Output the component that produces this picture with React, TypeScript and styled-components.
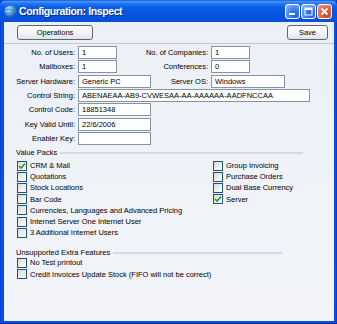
import React from 'react';
import styled, { createGlobalStyle } from 'styled-components';

const GlobalStyle = createGlobalStyle`
  html, body {
    margin: 0;
    padding: 0;
    background: #0b47df;
  }
  body {
    font-family: "Liberation Sans", Arial, sans-serif;
  }
`;

type Pack = { label: string; on?: boolean };

const leftPacks: Pack[] = [
  { label: 'CRM & Mail', on: true },
  { label: 'Quotations' },
  { label: 'Stock Locations' },
  { label: 'Bar Code' },
  { label: 'Currencies, Languages and Advanced Pricing' },
  { label: 'Internet Server One Internet User' },
  { label: '3 Additional Internet Users' },
];

const rightPacks: Pack[] = [
  { label: 'Group Invoicing' },
  { label: 'Purchase Orders' },
  { label: 'Dual Base Currency' },
  { label: 'Server', on: true },
];

const extras: Pack[] = [
  { label: 'No Test printout' },
  { label: 'Credit Invoices Update Stock (FIFO will not be correct)' },
];

const CheckMark: React.FC = () => (
  <svg width="8" height="8" viewBox="0 0 8 8">
    <path d="M1 4 L3 6 L7 1.6" fill="none" stroke="#21a121" strokeWidth="1.6" />
  </svg>
);

const CheckItem: React.FC<{ item: Pack }> = ({ item }) => (
  <Item>
    <Box>{item.on && <CheckMark />}</Box>
    {item.label}
  </Item>
);

const App: React.FC = () => {
  return (
    <React.Fragment>
      <GlobalStyle />
      <Window>
        <TitleBar>
          <AppIcon width="13" height="13" viewBox="0 0 13 13">
            <defs>
              <radialGradient id="globe" cx="0.35" cy="0.3" r="0.75">
                <stop offset="0" stopColor="#e8f4ff" />
                <stop offset="0.45" stopColor="#5aa6e6" />
                <stop offset="1" stopColor="#1a4f9a" />
              </radialGradient>
            </defs>
            <circle cx="6.5" cy="6.5" r="6" fill="url(#globe)" />
            <path d="M2 5 Q5 3 8 5 T12 6" fill="none" stroke="#2f7fc8" strokeWidth="1" />
          </AppIcon>
          <Title>Configuration: Inspect</Title>
          <WinButtons>
            <WinButton $kind="min">
              <svg width="13" height="13" viewBox="0 0 13 13">
                <rect x="3" y="8" width="6" height="2" fill="#fff" />
              </svg>
            </WinButton>
            <WinButton $kind="max">
              <svg width="13" height="13" viewBox="0 0 13 13">
                <rect x="3" y="3" width="7" height="7" fill="none" stroke="#fff" strokeWidth="1" />
                <rect x="3" y="3" width="7" height="2" fill="#fff" />
              </svg>
            </WinButton>
            <WinButton $kind="close">
              <svg width="13" height="13" viewBox="0 0 13 13">
                <path d="M3.5 3.5 L9.5 9.5 M9.5 3.5 L3.5 9.5" stroke="#fff" strokeWidth="1.8" />
              </svg>
            </WinButton>
          </WinButtons>
        </TitleBar>
        <Client>
          <Toolbar>
            <Button $w={76}>Operations</Button>
            <Button $w={41}>Save</Button>
          </Toolbar>

          <Form>
            <Label>No. of Users:</Label>
            <Field $w={39}>1</Field>
            <Label>No. of Companies:</Label>
            <Field $w={39}>1</Field>

            <Label>Mailboxes:</Label>
            <Field $w={39}>1</Field>
            <Label>Conferences:</Label>
            <Field $w={39}>0</Field>

            <Label>Server Hardware:</Label>
            <Field $w={73}>Generic PC</Field>
            <Label>Server OS:</Label>
            <Field $w={74}>Windows</Field>

            <Label>Control String:</Label>
            <Field $w={232} $span>ABENAEAA-AB9-CVWESAA-AA-AAAAAA-AADFNCCAA</Field>

            <Label>Control Code:</Label>
            <Field $w={73} $span>18851348</Field>

            <Label>Key Valid Until:</Label>
            <Field $w={73} $span>22/6/2006</Field>

            <Label>Enabler Key:</Label>
            <Field $w={73} $span />
          </Form>

          <Group $right={303} $top={3}>
            <GroupHead>
              Value Packs
              <Rule />
            </GroupHead>
            <Columns>
              <List>
                {leftPacks.map((p) => (
                  <CheckItem key={p.label} item={p} />
                ))}
              </List>
              <List>
                {rightPacks.map((p) => (
                  <CheckItem key={p.label} item={p} />
                ))}
              </List>
            </Columns>
          </Group>

          <Group $right={282} $top={9}>
            <GroupHead>
              Unsupported Extra Features
              <Rule />
            </GroupHead>
            <List>
              {extras.map((p) => (
                <CheckItem key={p.label} item={p} />
              ))}
            </List>
          </Group>
        </Client>
      </Window>
    </React.Fragment>
  );
};

const Window = styled.div`
  width: 337px;
  height: 324px;
  box-sizing: border-box;
  display: flex;
  flex-direction: column;
  background: linear-gradient(to right, #0036c8 0, #0b4ee6 1px, #0b4ee6 336px, #0030b8 337px);
  box-shadow: inset 0 -1px 0 #002aa8;
`;

const TitleBar = styled.div`
  height: 22px;
  flex: 0 0 22px;
  display: flex;
  align-items: center;
  padding: 0 5px 0 4px;
  box-sizing: border-box;
  background: linear-gradient(
    to bottom,
    #0a5ad6 0%,
    #4791f6 7%,
    #2677f0 16%,
    #0b5ee8 32%,
    #0656e2 60%,
    #0552dc 85%,
    #0b4fd8 100%
  );
  border-radius: 6px 6px 0 0;
`;

const AppIcon = styled.svg`
  flex: 0 0 13px;
  margin-right: 2px;
`;

const Title = styled.div`
  flex: 1;
  color: #fff;
  font-weight: bold;
  font-size: 10.5px;
  letter-spacing: -0.4px;
  text-shadow: 1px 1px 0 #0a2f8c;
  white-space: nowrap;
`;

const WinButtons = styled.div`
  display: flex;
  gap: 1px;
`;

const WinButton = styled.div<{ $kind: 'min' | 'max' | 'close' }>`
  width: 15px;
  height: 15px;
  box-sizing: border-box;
  border: 1px solid #fff;
  border-radius: 3px;
  display: flex;
  align-items: center;
  justify-content: center;
  background: ${(p) =>
    p.$kind === 'close'
      ? 'radial-gradient(circle at 70% 75%, #cc4622 0%, #e0613a 45%, #f0a088 100%)'
      : 'radial-gradient(circle at 70% 75%, #1f5ee6 0%, #3f80f4 45%, #9cc2fb 100%)'};
`;

const Client = styled.div`
  flex: 1;
  margin: 0 3px 3px 4px;
  background: linear-gradient(to bottom, #ecf0f6, #f2f4f8);
  display: flex;
  flex-direction: column;
`;

const Toolbar = styled.div`
  height: 22px;
  box-sizing: border-box;
  display: flex;
  align-items: center;
  justify-content: space-between;
  padding: 0 6px 1px 13px;
  border-bottom: 1px solid #c3c8d0;
`;

const Button = styled.div<{ $w: number }>`
  width: ${(p) => p.$w}px;
  height: 15px;
  box-sizing: border-box;
  border: 1px solid #5d6673;
  border-radius: 3px;
  background: linear-gradient(to bottom, #ffffff, #f1f2f5 60%, #dfe2e8);
  font-size: 7.5px;
  color: #000;
  display: flex;
  align-items: center;
  justify-content: center;
`;

const Form = styled.div`
  display: grid;
  grid-template-columns: 71px 39px 88px auto;
  grid-auto-rows: 13px;
  column-gap: 3px;
  row-gap: 1.33px;
  align-items: center;
  padding-top: 2px;
`;

const Label = styled.div`
  font-size: 7.5px;
  color: #000;
  text-align: right;
  justify-self: end;
  white-space: nowrap;
`;

const Field = styled.div<{ $w: number; $span?: boolean }>`
  width: ${(p) => p.$w}px;
  height: 13px;
  box-sizing: border-box;
  border: 1px solid #8593a6;
  background: #fff;
  font-size: 7.5px;
  line-height: 11px;
  padding-left: 3px;
  white-space: nowrap;
  color: #000;
  ${(p) => (p.$span ? 'grid-column: 2 / -1;' : '')}
`;

const Group = styled.div<{ $right: number; $top: number }>`
  width: ${(p) => p.$right - 4 - 12}px;
  margin: ${(p) => p.$top}px 0 0 12px;
`;

const GroupHead = styled.div`
  display: flex;
  align-items: center;
  height: 10px;
  font-size: 7.5px;
  color: #000;
  white-space: nowrap;
`;

const Rule = styled.div`
  flex: 1;
  height: 2px;
  margin-left: 3px;
  margin-top: 1px;
  background: #d4d8df;
`;

const Columns = styled.div`
  display: grid;
  grid-template-columns: 196px auto;
  margin-top: 2px;
`;

const List = styled.div`
  display: grid;
  grid-auto-rows: 11.2px;
  align-items: center;
  padding-left: 1px;
`;

const Item = styled.div`
  display: flex;
  align-items: center;
  gap: 3px;
  font-size: 7.5px;
  color: #000;
  white-space: nowrap;
`;

const Box = styled.span`
  flex: 0 0 10px;
  width: 10px;
  height: 10px;
  box-sizing: border-box;
  border: 1px solid #1c5180;
  background: linear-gradient(135deg, #d8d9d4, #f6f6f3 70%, #ffffff);
  display: flex;
  align-items: center;
  justify-content: center;
`;

export default App;
